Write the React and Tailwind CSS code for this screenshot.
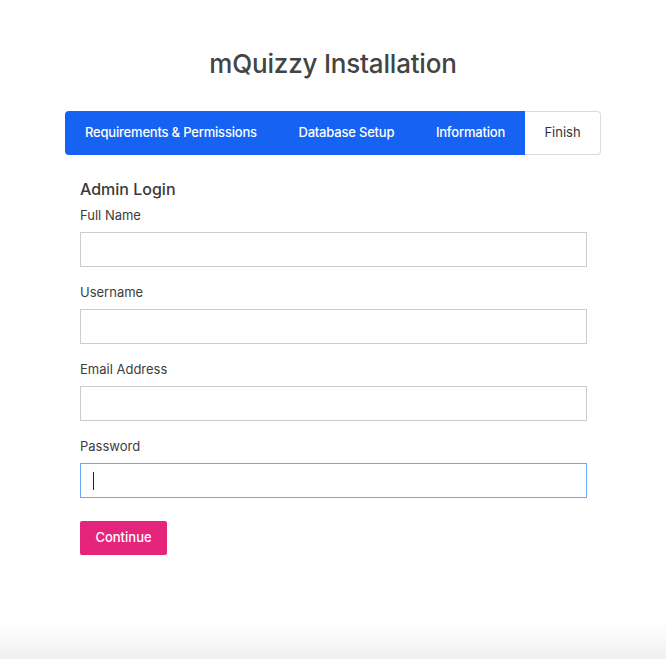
import React from "react";

const font = { fontFamily: "Inter, 'Noto Sans', sans-serif" };

function Field({ label, focused }) {
  return (
    <div className="flex flex-col">
      <label className="text-[13px] leading-[16px] text-[#3d3d3d] mb-[9px]">{label}</label>
      <div
        className={
          "h-[35px] w-full border bg-white flex items-center pl-[12px] " +
          (focused ? "border-[#6aa8f2]" : "border-[#c8cdd2]")
        }
      >
        {focused && <div className="w-px h-[18px] bg-[#222]" />}
      </div>
    </div>
  );
}

export default function App() {
  return (
    <div
      style={font}
      className="h-[659px] w-full bg-[linear-gradient(to_bottom,#ffffff_0%,#ffffff_94.5%,#f0f0f0_100%)] flex flex-col items-center"
    >
      <h1 className="mt-[47px] text-[26px] leading-[34px] font-medium text-[#444] tracking-[-0.2px]">
        mQuizzy Installation
      </h1>
      <div className="w-[536px] mt-[30px]">
        <div className="flex h-[44px] text-[13px] whitespace-nowrap">
          <div className="flex w-[460px] justify-between bg-[#1662f3] rounded-l-[4px] text-white font-medium tracking-[-0.2px]">
            <div className="pl-[20px] flex items-center">Requirements &amp; Permissions</div>
            <div className="flex items-center">Database Setup</div>
            <div className="pr-[20px] flex items-center">Information</div>
          </div>
          <div className="flex-1 flex items-center justify-center border border-l-0 border-[#dcdcdc] rounded-r-[4px] text-[#333]">
            Finish
          </div>
        </div>
        <div className="pl-[15px] pr-[14px] pt-[24px]">
          <h2 className="text-[16px] leading-[20px] font-medium text-[#3a3a3a] mb-[8px]">Admin Login</h2>
          <div className="flex flex-col gap-[17px]">
            <Field label="Full Name" />
            <Field label="Username" />
            <Field label="Email Address" />
            <Field label="Password" focused />
          </div>
          <button className="mt-[23px] h-[34px] w-[87px] bg-[#e5247b] text-white text-[13px] font-medium rounded-[2px]">
            Continue
          </button>
        </div>
      </div>
    </div>
  );
}
